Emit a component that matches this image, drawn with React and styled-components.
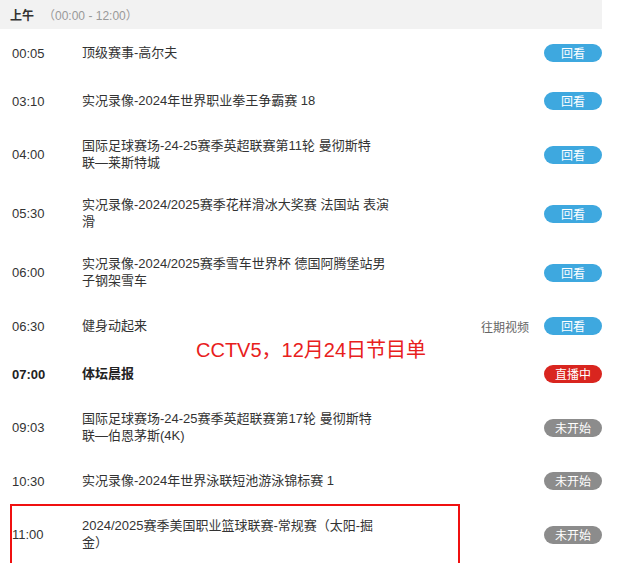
import React from 'react';
import styled, { createGlobalStyle } from 'styled-components';

const GlobalStyle = createGlobalStyle`
	html, body {
		margin: 0;
		padding: 0;
		background: #fff;
	}
	body {
		font-family: "Liberation Sans", "Noto Sans CJK SC", sans-serif;
		color: #333;
	}
`;

const Page = styled.div`
	position: relative;
	width: 602px;
	min-height: 563px;
	font-size: 13px;
`;

const Header = styled.div`
	display: flex;
	align-items: center;
	height: 29px;
	padding-left: 10px;
	background: #f2f2f2;
	& .label {
		font-family: "Noto Sans CJK SC", sans-serif;
		font-weight: bold;
		font-size: 12px;
		color: #333;
	}
	& .range {
		margin-left: 9px;
		font-size: 12px;
		color: #999;
		font-family: "Liberation Sans", "Noto Sans CJK SC", sans-serif;
	}
`;

const Row = styled.div`
	position: relative;
	display: grid;
	grid-template-columns: 70px 308px 1fr 58px;
	align-items: center;
	padding: 13px 0 13px 12px;
	min-height: 22px;
	font-weight: ${p => p.$live ? 'bold' : 'normal'};
	color: ${p => p.$live ? '#222' : '#333'};
`;

const Time = styled.div`
	font-family: "Liberation Sans", sans-serif;
	font-size: 13px;
`;

const Title = styled.div`
	font-family: "Liberation Sans", "Noto Sans CJK SC", sans-serif;
	font-size: 13px;
	line-height: 16.5px;
`;

const Extra = styled.div`
	justify-self: end;
	margin-right: 15px;
	font-family: "Noto Sans CJK SC", sans-serif;
	font-size: 12px;
	color: #666;
`;

const colors = {
	replay: '#3ea8df',
	live: '#d9251f',
	soon: '#8c8c8c',
};

const Badge = styled.div`
	width: 58px;
	height: 18px;
	line-height: 18px;
	border-radius: 9px;
	text-align: center;
	font-family: "Noto Sans CJK SC", sans-serif;
	font-size: 12px;
	font-weight: normal;
	color: #fff;
	background: ${p => colors[p.$kind]};
`;

const Note = styled.div`
	position: absolute;
	top: 336px;
	left: 196px;
	line-height: 28px;
	font-family: "Liberation Sans", "Noto Sans CJK SC", sans-serif;
	font-size: 20px;
	color: #e8201c;
	white-space: nowrap;
`;

const Highlight = styled.div`
	position: absolute;
	top: -1px;
	left: 10px;
	width: 446px;
	height: 80px;
	border: 2px solid #f01010;
	pointer-events: none;
`;

const labels = { replay: '回看', live: '直播中', soon: '未开始' };

const programs = [
	{ time: '00:05', title: '顶级赛事-高尔夫', kind: 'replay' },
	{ time: '03:10', title: '实况录像-2024年世界职业拳王争霸赛 18', kind: 'replay' },
	{ time: '04:00', title: '国际足球赛场-24-25赛季英超联赛第11轮 曼彻斯特联\u2060—莱斯特城', kind: 'replay' },
	{ time: '05:30', title: '实况录像-2024/2025赛季花样滑冰大奖赛 法国站 表演滑', kind: 'replay' },
	{ time: '06:00', title: '实况录像-2024/2025赛季雪车世界杯 德国阿腾堡站男子钢架雪车', kind: 'replay' },
	{ time: '06:30', title: '健身动起来', kind: 'replay', extra: '往期视频' },
	{ time: '07:00', title: '体坛晨报', kind: 'live' },
	{ time: '09:03', title: '国际足球赛场-24-25赛季英超联赛第17轮 曼彻斯特联\u2060—伯恩茅斯(4K)', kind: 'soon' },
	{ time: '10:30', title: '实况录像-2024年世界泳联短池游泳锦标赛 1', kind: 'soon' },
	{ time: '11:00', title: '2024/2025赛季美国职业篮球联赛-常规赛（太阳-掘金）', kind: 'soon', marked: true },
];

export default function App() {
	return (
		<Page>
			<GlobalStyle />
			<Header>
				<span className='label'>上午</span>
				<span className='range'>（00:00 - 12:00）</span>
			</Header>
			{programs.map(p => (
				<Row key={p.time} $live={p.kind === 'live'}>
					<Time>{p.time}</Time>
					<Title>{p.title}</Title>
					<Extra>{p.extra}</Extra>
					<Badge $kind={p.kind}>{labels[p.kind]}</Badge>
					{p.marked && <Highlight />}
				</Row>
			))}
			<Note>CCTV5，12月24日节目单</Note>
		</Page>
	);
}
